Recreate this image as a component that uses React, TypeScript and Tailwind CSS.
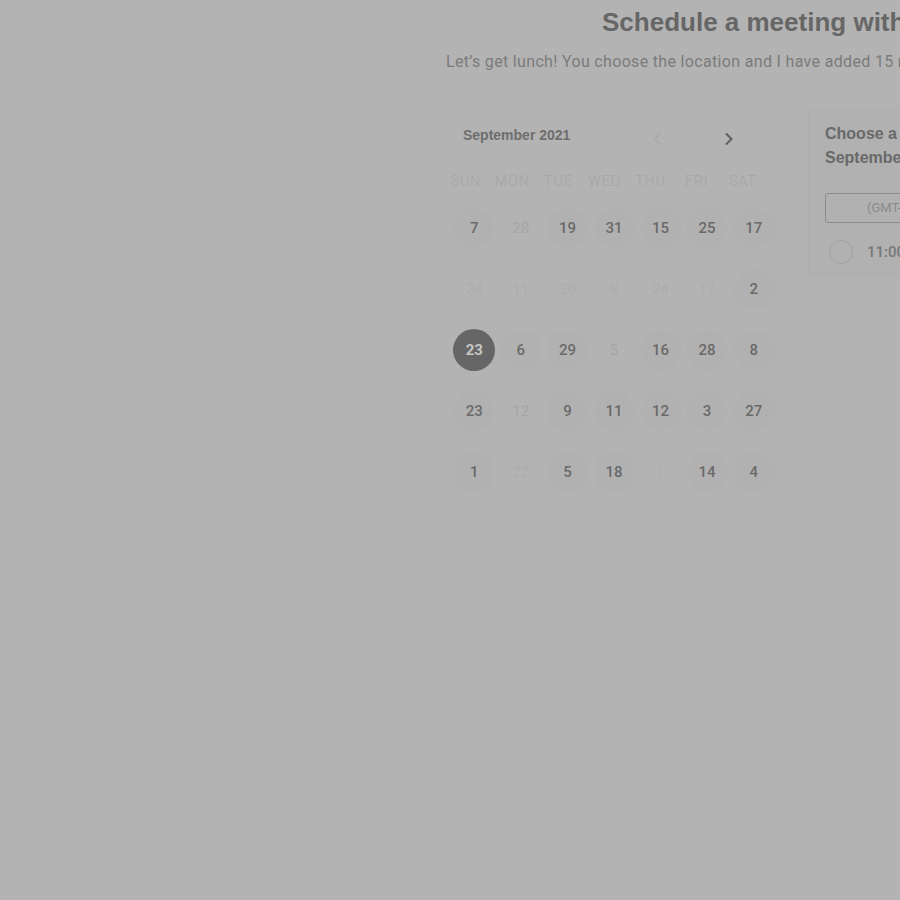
import React from 'react';

type Day = { n: number; on: boolean; faint?: boolean };

const rows: Day[][] = [
  [{ n: 7, on: true }, { n: 28, on: false }, { n: 19, on: true }, { n: 31, on: true }, { n: 15, on: true }, { n: 25, on: true }, { n: 17, on: true }],
  [{ n: 24, on: false, faint: true }, { n: 11, on: false, faint: true }, { n: 30, on: false, faint: true }, { n: 9, on: false, faint: true }, { n: 24, on: false, faint: true }, { n: 17, on: false, faint: true }, { n: 2, on: true }],
  [{ n: 23, on: true }, { n: 6, on: true }, { n: 29, on: true }, { n: 5, on: false }, { n: 16, on: true }, { n: 28, on: true }, { n: 8, on: true }],
  [{ n: 23, on: true }, { n: 12, on: false }, { n: 9, on: true }, { n: 11, on: true }, { n: 12, on: true }, { n: 3, on: true }, { n: 27, on: true }],
  [{ n: 1, on: true }, { n: 22, on: false, faint: true }, { n: 5, on: true }, { n: 18, on: true }, { n: 1, on: false, faint: true }, { n: 14, on: true }, { n: 4, on: true }],
];

const weekdays = ['Sun', 'Mon', 'Tue', 'Wed', 'Thu', 'Fri', 'Sat'];

const App: React.FC = () => {
  return (
    <div className="w-[900px] h-[900px] overflow-hidden bg-[#b3b3b3] font-['Roboto','Liberation_Sans',sans-serif]">
      <div className="ml-[443px] w-[700px] pt-[7px]">
        {/* Heading */}
        <h1 className="pl-[159px] text-[26px] leading-[30px] font-bold text-[#666666] whitespace-nowrap font-['Liberation_Sans','Arial',sans-serif]">
          Schedule a meeting with Alex
        </h1>
        <p className="mt-[15px] pl-[3px] text-[16px] leading-[20px] tracking-[0.33px] text-[#7b7b7b] whitespace-nowrap">
          Let’s get lunch! You choose the location and I have added 15 minutes of travel time.
        </p>

        <div className="mt-[34px] flex items-start">
          {/* Calendar */}
          <div className="w-[332px] pb-[10px] border-t border-r border-[#b0b0b0]">
            <div className="flex items-center h-[57px] pl-[20px] pr-[40px]">
              <span className="text-[14px] font-bold text-[#6e6e6e] font-['Liberation_Sans','Arial',sans-serif]">September 2021</span>
              <div className="ml-auto flex items-center gap-[62px] pt-[6px]">
                <svg width="10" height="14" viewBox="0 0 10 14" fill="none">
                  <path d="M8 1.5 2.5 7 8 12.5" stroke="#a9a9a9" strokeWidth="1.6" />
                </svg>
                <svg width="10" height="14" viewBox="0 0 10 14" fill="none">
                  <path d="M2 1.5 7.5 7 2 12.5" stroke="#5f5f5f" strokeWidth="2" />
                </svg>
              </div>
            </div>
            <div className="mt-[2px] grid grid-cols-7 w-[323px]">
              {weekdays.map((d) => (
                <div key={d} className="h-[30px] flex items-center justify-center text-[14px] font-light uppercase tracking-[1px] text-[#a5a5a5]">
                  {d}
                </div>
              ))}
            </div>
            <div className="w-[326px] ml-[8px] mt-[12px] flex flex-col gap-[21px]">
              {rows.map((row, ri) => (
                <div key={ri} className="grid grid-cols-7">
                  {row.map((d, ci) => {
                    const selected = ri === 2 && ci === 0;
                    if (selected) {
                      return (
                        <div key={ci} className="flex items-center justify-center h-[40px]">
                          <span className="w-[42px] h-[42px] rounded-full bg-[#666666] flex items-center justify-center text-[15px] font-bold text-[#c6c6c6]">
                            {d.n}
                          </span>
                        </div>
                      );
                    }
                    return (
                      <div key={ci} className="flex items-center justify-center h-[40px]">
                        <span
                          className={
                            d.on
                              ? 'w-[40px] h-[40px] rounded-full bg-[#b1b1b1] flex items-center justify-center text-[15px] font-medium text-[#6a6a6a]'
                              : d.faint
                              ? 'w-[40px] h-[40px] flex items-center justify-center text-[15px] text-[#adadad]'
                              : 'w-[40px] h-[40px] flex items-center justify-center text-[15px] text-[#a6a6a6]'
                          }
                        >
                          {d.n}
                        </span>
                      </div>
                    );
                  })}
                </div>
              ))}
            </div>
          </div>

          {/* Time slots */}
          <div className="ml-[33px] mt-[3px] w-[300px] h-[167px] bg-[#b1b1b1] border-l border-b border-[#adadad] pl-[16px] pt-[13px]">
            <h2 className="text-[16px] leading-[24px] font-bold text-[#696969] whitespace-nowrap font-['Liberation_Sans','Arial',sans-serif]">
              Choose a time on
              <br />
              September 23
            </h2>
            <div className="mt-[23px] h-[30px] w-[260px] border border-[#8c8c8c] rounded-[3px] flex items-center pl-[41px] text-[13px] text-[#8a8a8a] whitespace-nowrap">
              (GMT-07:00) Pacific Time
            </div>
            <div className="mt-[17px] flex items-center gap-[14px] pl-[4px]">
              <span className="w-[24px] h-[24px] rounded-full border-[1.5px] border-[#a2a2a2]" />
              <span className="text-[15px] font-medium text-[#777777]">11:00 AM</span>
            </div>
          </div>
        </div>
      </div>
    </div>
  );
};

export default App;
